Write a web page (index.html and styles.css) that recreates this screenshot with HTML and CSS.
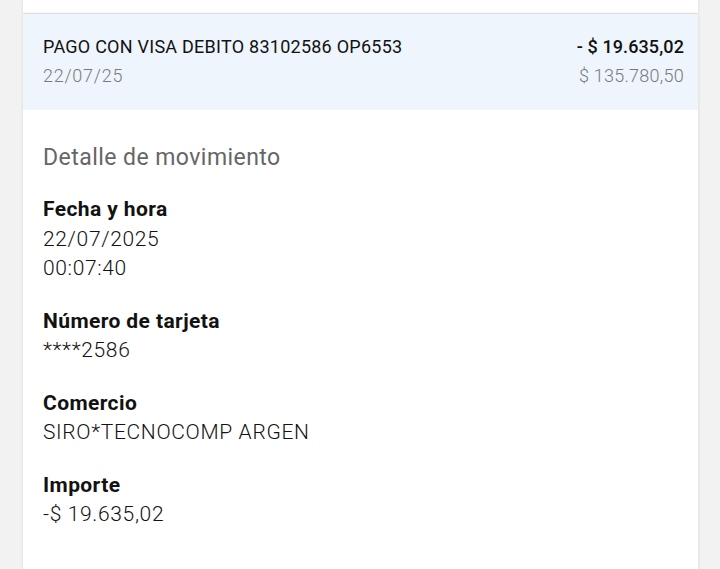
FILE: index.html
```html
<!doctype html>
<html>
<head>
<meta charset="utf-8">
<meta name="viewport" content="width=device-width, initial-scale=1">
<link rel="stylesheet" href="styles.css">
</head>
<body>
<div class="page">
    <div class="card card--top"></div>
    <div class="card">
        <div class="movement">
            <div class="movement__row">
                <span class="movement__title">PAGO CON VISA DEBITO 83102586 OP6553</span>
                <span class="movement__amount">- $ 19.635,02</span>
            </div>
            <div class="movement__row">
                <span class="movement__date">22/07/25</span>
                <span class="movement__balance">$ 135.780,50</span>
            </div>
        </div>
        <div class="detail">
            <h2 class="detail__heading">Detalle de movimiento</h2>
            <div class="detail__item">
                <div class="detail__label">Fecha y hora</div>
                <div class="detail__value">22/07/2025</div>
                <div class="detail__value">00:07:40</div>
            </div>
            <div class="detail__item">
                <div class="detail__label">Número de tarjeta</div>
                <div class="detail__value">****2586</div>
            </div>
            <div class="detail__item">
                <div class="detail__label">Comercio</div>
                <div class="detail__value">SIRO*TECNOCOMP ARGEN</div>
            </div>
            <div class="detail__item">
                <div class="detail__label">Importe</div>
                <div class="detail__value">-$ 19.635,02</div>
            </div>
        </div>
    </div>
</div>
</body>
</html>
```

FILE: styles.css
```css
body {
    font-family: Roboto, "Noto Sans", sans-serif;
    background-color: #f2f2f2;
    margin: 0;
    color: #121212;
    overflow: hidden;
}
.page {
    margin: 0 22px 0 23px;
}
.card {
    background-color: white;
    box-shadow: 0 0 3px rgba(0, 0, 0, 0.12);
    min-height: 560px;
}
.card--top {
    min-height: 0;
    height: 13px;
    margin-bottom: 1px;
}
.movement {
    background-color: #eef5fc;
    height: 96px;
    padding: 18px 14px 0 20px;
    box-sizing: border-box;
}
.movement__row {
    display: flex;
    justify-content: space-between;
    line-height: 29px;
}
.movement__title,
.movement__amount {
    font-size: 18px;
}
.movement__title {
    letter-spacing: 0.25px;
}
.movement__amount {
    font-weight: 500;
    letter-spacing: 0.1px;
}
.movement__date,
.movement__balance {
    font-size: 18px;
    color: #7a7a7a;
    font-weight: 300;
}
.movement__date {
    letter-spacing: 0.75px;
}
.movement__balance {
    letter-spacing: 0.25px;
}
.detail {
    padding: 30px 20px;
}
.detail__heading {
    font-size: 23px;
    font-weight: 400;
    color: #666;
    margin: 0 0 19px;
    line-height: 36px;
    letter-spacing: 0.45px;
}
.detail__item {
    margin-bottom: 23px;
}
.detail__label {
    font-size: 21px;
    font-weight: 700;
    line-height: 29.5px;
    letter-spacing: 0.4px;
}
.detail__value {
    font-size: 21px;
    font-weight: 300;
    line-height: 29.5px;
    letter-spacing: 0.65px;
}
```
